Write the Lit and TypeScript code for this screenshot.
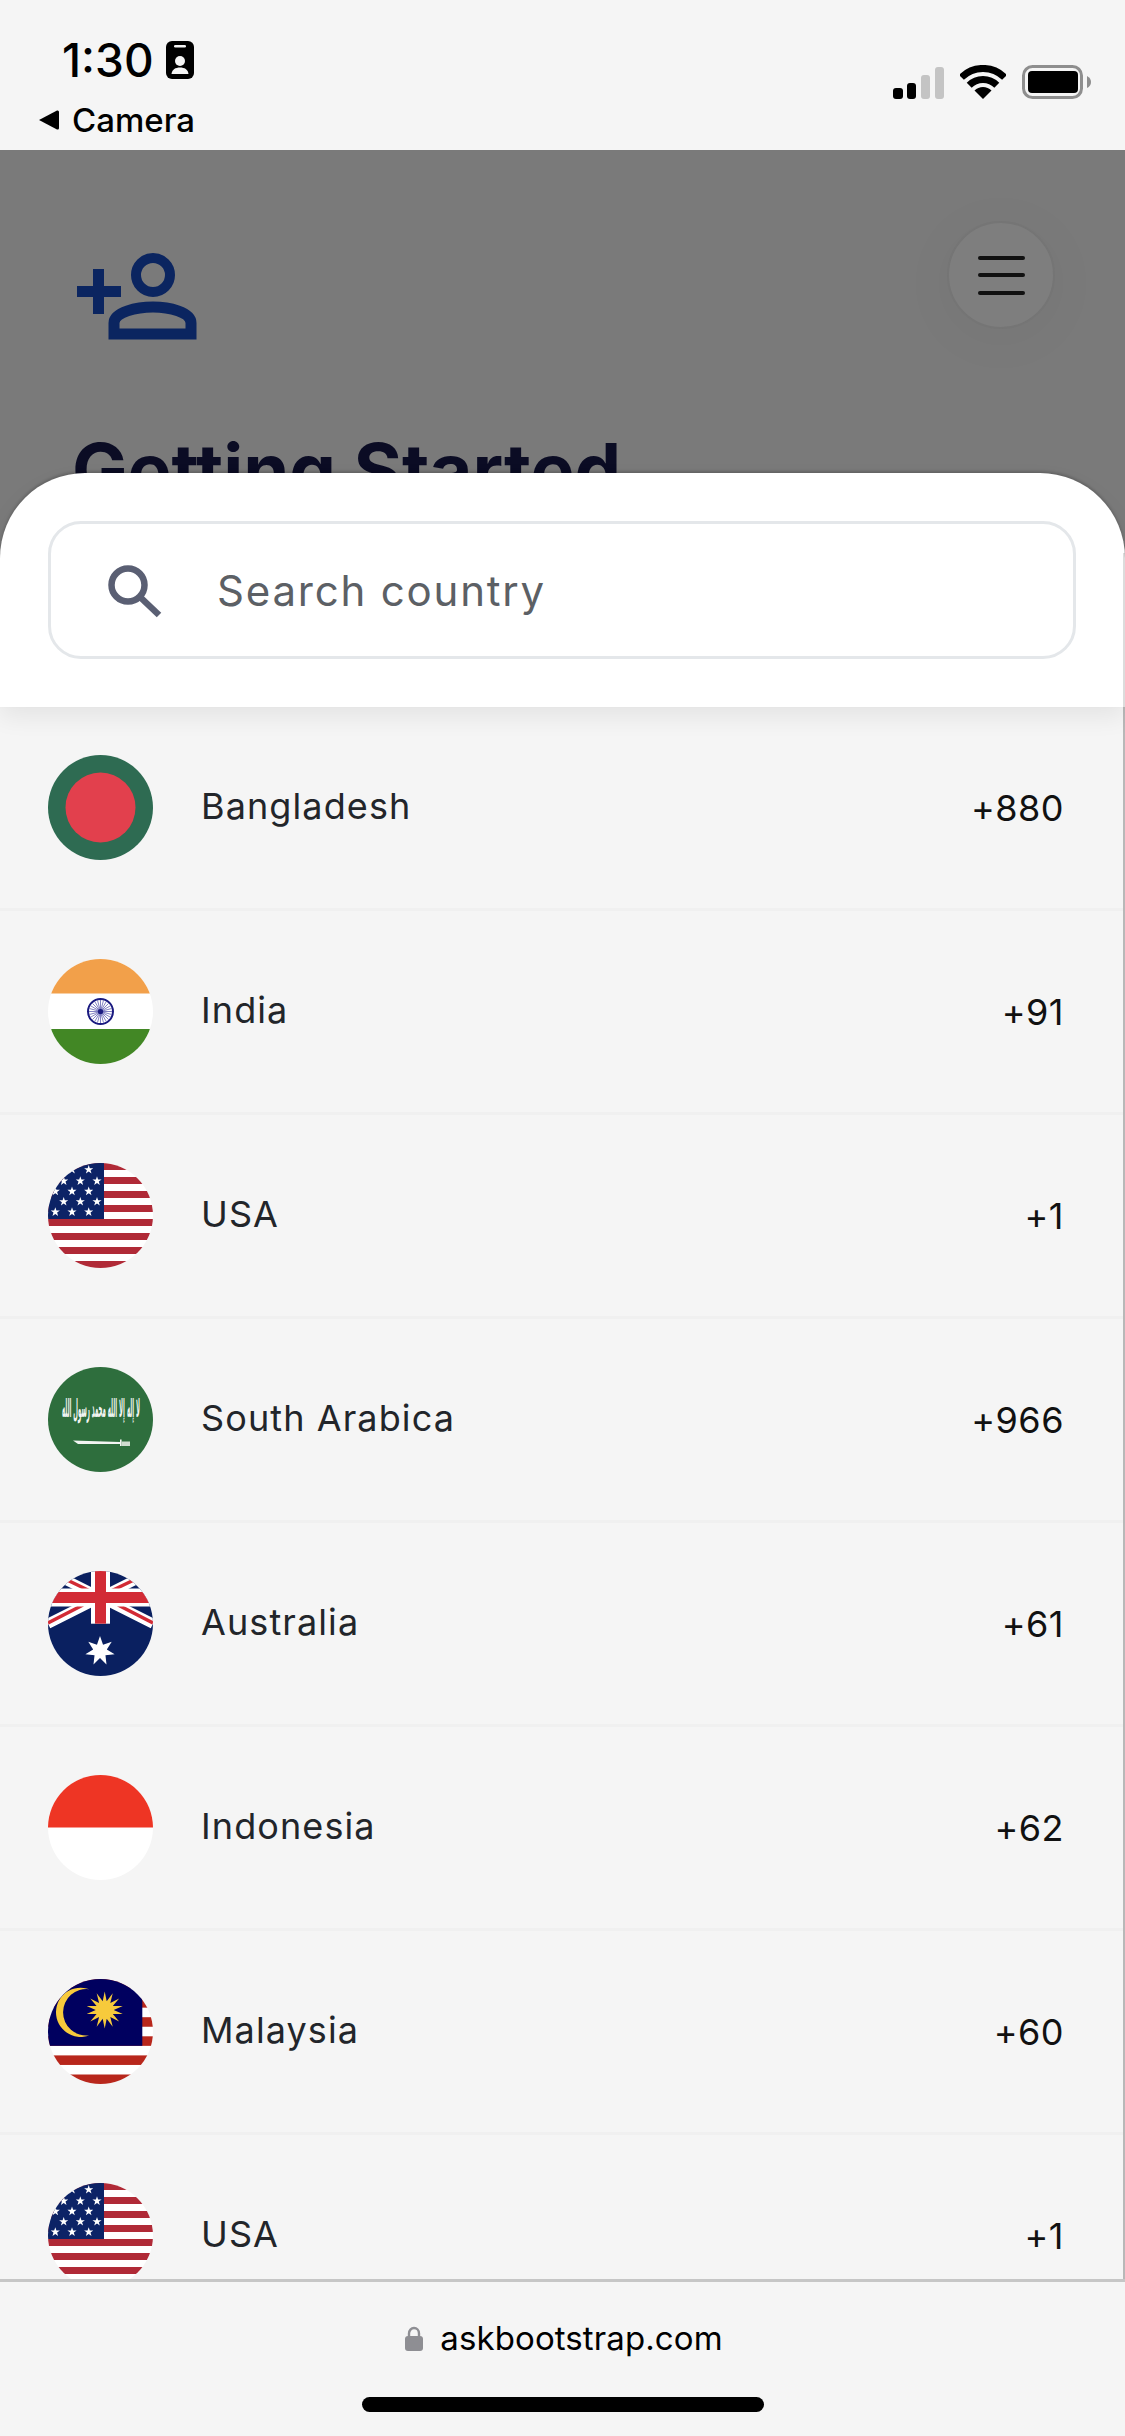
import { LitElement, html, css, svg } from "lit";
import { customElement } from "lit/decorators.js";

// points for an n-pointed star polygon
function star(cx: number, cy: number, outer: number, inner: number, n: number) {
  const pts: string[] = [];
  for (let i = 0; i < n * 2; i++) {
    const r = i % 2 ? inner : outer;
    const a = (Math.PI * i) / n - Math.PI / 2;
    pts.push(`${(cx + r * Math.cos(a)).toFixed(2)},${(cy + r * Math.sin(a)).toFixed(2)}`);
  }
  return pts.join(" ");
}

const usaStars: [number, number][] = [
  [7.3, 6.7], [24, 6.7], [40.7, 6.7],
  [15.7, 18], [32.3, 18], [49, 18],
  [7.3, 28.3], [24, 28.3], [40.7, 28.3],
  [15.7, 38.7], [32.3, 38.7], [49, 38.7],
  [7.3, 49], [24, 49], [40.7, 49],
];

const flagBangladesh = svg`
  <rect width="105" height="105" fill="#2e6b52" />
  <circle cx="52.5" cy="52.5" r="35" fill="#e2404d" />
`;

const flagIndia = svg`
  <rect width="105" height="105" fill="#fff" />
  <rect width="105" height="34.5" fill="#f2a04a" />
  <rect y="70" width="105" height="35" fill="#428725" />
  <circle cx="52.5" cy="52.5" r="12.5" fill="#fff" stroke="#1a1a80" stroke-width="2" />
  ${Array.from({ length: 24 }, (_, i) => {
    const a = (i * Math.PI) / 12;
    return svg`<line x1="52.5" y1="52.5" x2="${52.5 + 11.5 * Math.cos(a)}" y2="${52.5 + 11.5 * Math.sin(a)}" stroke="#4a4aa8" stroke-width=".7" />`;
  })}
  <circle cx="52.5" cy="52.5" r="2.6" fill="#1a1a80" />
`;

const flagUsa = svg`
  <rect width="105" height="105" fill="#fff" />
  ${Array.from({ length: 8 }, (_, i) => svg`<rect y="${i * 14}" width="105" height="7" fill="#b02a37" />`)}
  <rect width="56" height="56" fill="#0c2366" />
  ${usaStars.map(([x, y]) => svg`<polygon points="${star(x, y, 4.8, 1.9, 5)}" fill="#fff" />`)}
`;

const flagSaudi = svg`
  <rect width="105" height="105" fill="#2e6e3d" />
  <text transform="translate(53 50) scale(.68 3.2)" text-anchor="middle" direction="rtl"
    font-family="'DejaVu Sans', sans-serif" font-weight="700" font-size="8" fill="#f2f5f2">لا إله إلا الله محمد رسول الله</text>
  <path d="M25 73.5 L72 75 V77 L30 77 Z" fill="#f2f5f2" />
  <rect x="72" y="72.5" width="1.6" height="6.5" fill="#f2f5f2" />
  <rect x="73.6" y="74.5" width="8.4" height="4.5" fill="#cfdccf" />
`;

const flagAustralia = svg`
  <rect width="105" height="105" fill="#0a2060" />
  <path d="M0 0 L105 52.7 M105 0 L0 52.7" stroke="#fff" stroke-width="10" />
  <path d="M17 8 L42 20 M88 8 L63 20 M0 52 L35 34 M105 52 L70 34" stroke="#d22b35" stroke-width="3.5" />
  <rect x="43" width="19" height="52.7" fill="#fff" />
  <rect y="17.5" width="105" height="18" fill="#fff" />
  <rect x="47" width="11" height="52.7" fill="#d22b35" />
  <rect y="21" width="105" height="11" fill="#d22b35" />
  <polygon points="${star(52, 80, 15, 7, 7)}" fill="#fff" />
`;

const flagIndonesia = svg`
  <rect width="105" height="105" fill="#fff" />
  <rect width="105" height="52.5" fill="#ee3524" />
`;

const flagMalaysia = svg`
  <rect width="105" height="105" fill="#fff" />
  ${[0, 2, 4, 6, 8, 10].map((i) => svg`<rect y="${i * 9.55}" width="105" height="9.55" fill="#b8271c" />`)}
  <rect width="94.3" height="66.8" fill="#00005f" />
  <path d="M41.3 10.3 A24.6 24.6 0 1 0 41.3 56.3 A23.2 23.2 0 1 1 41.3 10.3 Z" fill="#f7ca3c" />
  <polygon points="${star(56.7, 31, 18.5, 9, 14)}" fill="#f7ca3c" />
`;

const countries = [
  { name: "Bangladesh", code: "+880", flag: flagBangladesh },
  { name: "India", code: "+91", flag: flagIndia },
  { name: "USA", code: "+1", flag: flagUsa },
  { name: "South Arabica", code: "+966", flag: flagSaudi },
  { name: "Australia", code: "+61", flag: flagAustralia },
  { name: "Indonesia", code: "+62", flag: flagIndonesia },
  { name: "Malaysia", code: "+60", flag: flagMalaysia },
  { name: "USA", code: "+1", flag: flagUsa },
];

@customElement("app-root")
export class AppRoot extends LitElement {
  renderStatusBar() {
    return html`
      <div class="status">
        <div class="status-left">
          <div class="clock">
            <span class="time">1:30</span>
            <svg width="28" height="38" viewBox="0 0 28 38">
              <rect width="28" height="38" rx="6" fill="#000" />
              <rect x="8" y="4" width="12" height="2.6" rx="1.3" fill="#f5f5f5" />
              <circle cx="14" cy="20" r="5" fill="#f5f5f5" />
              <path d="M5.5 33 C6 28.5 9.5 26.5 14 26.5 S22 28.5 22.5 33 Z" fill="#f5f5f5" />
            </svg>
          </div>
          <div class="back">
            <svg width="21" height="22" viewBox="0 0 21 22">
              <path d="M1 11 L19 1.5 Q21 1 21 3 V19 Q21 21 19 20.5 Z" fill="#000" />
            </svg>
            <span>Camera</span>
          </div>
        </div>
        <div class="status-right">
          <svg width="51" height="32" viewBox="0 0 51 32">
            <rect y="21" width="10" height="11" rx="3" fill="#000" />
            <rect x="14" y="16" width="9" height="16" rx="3" fill="#000" />
            <rect x="28" y="8" width="9" height="24" rx="3" fill="#c4c4c4" />
            <rect x="42" y="0" width="9" height="32" rx="3" fill="#c4c4c4" />
          </svg>
          <svg width="46" height="34" viewBox="0 0 46 34">
            <path d="M1.4 12.4 A30.5 30.5 0 0 1 44.6 12.4" fill="none" stroke="#000" stroke-width="7" />
            <path d="M9.2 20.2 A19.5 19.5 0 0 1 36.8 20.2" fill="none" stroke="#000" stroke-width="7" />
            <path d="M23 34 L14.5 25.5 A12 12 0 0 1 31.5 25.5 Z" fill="#000" />
          </svg>
          <svg width="69" height="34" viewBox="0 0 69 34">
            <rect x="1.5" y="1.5" width="58" height="31" rx="9" fill="none" stroke="#8e8e8e" stroke-width="3" />
            <rect x="6" y="6" width="50" height="22" rx="4" fill="#000" />
            <path d="M65 11 Q69 13 69 17 T65 23 Z" fill="#8e8e8e" />
          </svg>
        </div>
      </div>
    `;
  }

  renderBackdrop() {
    return html`
      <div class="backdrop">
        <div class="top-row">
          <svg class="person" width="120" height="88" viewBox="0 0 120 88">
            <path d="M16 17 H27 V34 H44 V45 H27 V62 H16 V45 H0 V34 H16 Z" fill="#0b2560" />
            <circle cx="76" cy="23" r="17" fill="none" stroke="#0b2560" stroke-width="10" />
            <path d="M37 82 V71 C37 60 60 55 76 55 S114 60 114 71 V82 Z" fill="none" stroke="#0b2560" stroke-width="11" />
          </svg>
          <div class="menu-button">
            <span></span>
            <span></span>
            <span></span>
          </div>
        </div>
        <h1>Getting Started</h1>
      </div>
    `;
  }

  render() {
    return html`
      <div class="phone">
        ${this.renderStatusBar()} ${this.renderBackdrop()}
        <section class="sheet">
          <div class="search">
            <svg class="search-icon" width="54" height="54" viewBox="0 0 54 54">
              <circle cx="20" cy="21" r="16.5" fill="none" stroke="#5a5f73" stroke-width="6.5" />
              <path d="M32 33 L51 51" stroke="#5a5f73" stroke-width="6.5" />
            </svg>
            <span class="placeholder">Search country</span>
          </div>
        </section>
        <div class="list">
          ${countries.map(
            (c) => html`
              <div class="row">
                <svg class="flag" width="105" height="105" viewBox="0 0 105 105">${c.flag}</svg>
                <span class="name">${c.name}</span>
                <span class="code">${c.code}</span>
              </div>
            `
          )}
        </div>
        <footer class="footer">
          <div class="url">
            <svg width="18" height="25" viewBox="0 0 18 25">
              <path d="M4 11 V7.5 a5 5.5 0 0 1 10 0 V11" fill="none" stroke="#8e8e93" stroke-width="2.4" />
              <rect y="10" width="18" height="15" rx="3" fill="#8e8e93" />
            </svg>
            <span>askbootstrap.com</span>
          </div>
          <div class="home-bar"></div>
        </footer>
      </div>
    `;
  }

  static styles = css`
    :host {
      display: block;
      font-family: Inter, "Noto Sans", sans-serif;
    }
    .phone {
      display: flex;
      flex-direction: column;
      width: 1125px;
      height: 2436px;
      overflow: hidden;
      background: #f5f5f5;
    }

    .status {
      display: flex;
      justify-content: space-between;
      flex: none;
      height: 150px;
      box-sizing: border-box;
      color: #000;
    }
    .status-left {
      display: flex;
      flex-direction: column;
      padding: 41px 0 0 38px;
    }
    .clock {
      display: flex;
      align-items: center;
      gap: 12px;
      padding-left: 24px;
      height: 38px;
    }
    .time {
      font-size: 46px;
      font-weight: 500;
      line-height: 38px;
    }
    .back {
      display: flex;
      align-items: center;
      gap: 13px;
      margin-top: 21px;
      font-size: 33px;
      font-weight: 500;
      line-height: 40px;
    }
    .status-right {
      display: flex;
      align-items: flex-end;
      gap: 16px;
      padding: 0 34px 51px 0;
    }

    .backdrop {
      flex: none;
      height: 408px;
      box-sizing: border-box;
      overflow: hidden;
      padding: 71px 70px 0 77px;
      background: #7a7a7a;
    }
    .top-row {
      display: flex;
      justify-content: space-between;
      align-items: flex-start;
    }
    .person {
      margin-top: 31px;
    }
    .menu-button {
      display: flex;
      flex-direction: column;
      align-items: center;
      justify-content: center;
      gap: 13.5px;
      width: 108px;
      height: 108px;
      box-sizing: border-box;
      border: 2px solid #757575;
      border-radius: 50%;
      background: #7e7e7e;
      box-shadow: 0 8px 60px rgba(0, 0, 0, 0.04);
    }
    .menu-button span {
      width: 47px;
      height: 4px;
      border-radius: 2px;
      background: #111;
    }
    h1 {
      margin: 88px 0 0 -5px;
      font-size: 74px;
      font-weight: 700;
      line-height: 84px;
      color: #0b0c24;
      white-space: nowrap;
    }

    .sheet {
      position: relative;
      z-index: 2;
      flex: none;
      margin-top: -85px;
      padding: 48px 49px 48px 48px;
      border-radius: 85px 85px 0 0;
      background: linear-gradient(#dcdcdc, #dcdcdc) right 80px / 2px 100% no-repeat, #fff;
      box-shadow: 0 -2px 3px rgba(0, 0, 0, 0.18), 0 10px 24px rgba(0, 0, 0, 0.07);
    }
    .search {
      display: flex;
      align-items: center;
      height: 138px;
      box-sizing: border-box;
      border: 3px solid #e4e7ea;
      border-radius: 33px;
      padding-left: 57px;
    }
    .search-icon {
      flex: none;
      margin-right: 55px;
      margin-top: 2px;
    }
    .placeholder {
      font-size: 42px;
      color: #5c6065;
      letter-spacing: 1.8px;
    }

    .list {
      flex: 1;
      min-height: 0;
      overflow: hidden;
      border-right: 2px solid #b8b8b8;
    }
    .row {
      display: flex;
      align-items: center;
      padding: 48px 59px 48px 48px;
      border-bottom: 3px solid #f0f0f0;
    }
    .flag {
      flex: none;
      border-radius: 50%;
      margin-right: 48px;
    }
    .name {
      flex: 1;
      font-size: 36px;
      color: #22252a;
      letter-spacing: 1.1px;
      margin-top: -3px;
    }
    .code {
      font-size: 36px;
      letter-spacing: 0.5px;
      color: #111;
      margin-top: 1px;
    }

    .footer {
      flex: none;
      display: flex;
      flex-direction: column;
      align-items: center;
      height: 157px;
      box-sizing: border-box;
      border-top: 3px solid #c6c6c6;
      padding-top: 38px;
    }
    .url {
      display: flex;
      align-items: center;
      gap: 17px;
      height: 36px;
      font-size: 33px;
      letter-spacing: 0.1px;
      color: #000;
      margin-left: 3px;
    }
    .home-bar {
      width: 402px;
      height: 15px;
      margin-top: 41px;
      border-radius: 8px;
      background: #000;
    }
  `;
}

declare global {
  interface HTMLElementTagNameMap {
    "app-root": AppRoot;
  }
}
